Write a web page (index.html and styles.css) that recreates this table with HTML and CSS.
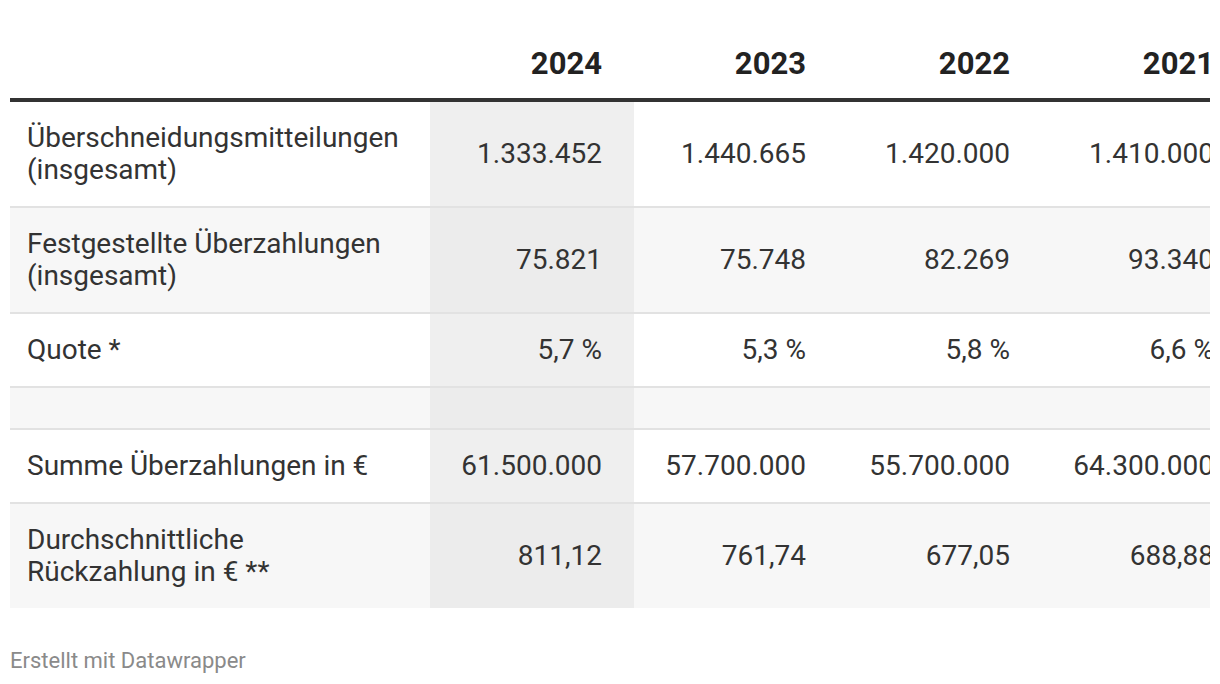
FILE: index.html
```html
<!DOCTYPE html>
<html lang="de">
<head>
<meta charset="utf-8">
<title>Überzahlungen</title>
<link rel="stylesheet" href="styles.css">
</head>
<body>
<div class="chart">
  <div class="table-wrap">
    <table class="data">
      <colgroup>
        <col class="c-label">
        <col class="c-num">
        <col class="c-num">
        <col class="c-num">
        <col class="c-num">
      </colgroup>
      <thead>
        <tr>
          <th class="label"></th>
          <th class="num hl-head">2024</th>
          <th class="num">2023</th>
          <th class="num">2022</th>
          <th class="num">2021</th>
        </tr>
      </thead>
      <tbody>
        <tr>
          <td class="label">Überschneidungsmitteilungen<br>(insgesamt)</td>
          <td class="num hl">1.333.452</td>
          <td class="num">1.440.665</td>
          <td class="num">1.420.000</td>
          <td class="num">1.410.000</td>
        </tr>
        <tr class="stripe">
          <td class="label">Festgestellte Überzahlungen<br>(insgesamt)</td>
          <td class="num hl">75.821</td>
          <td class="num">75.748</td>
          <td class="num">82.269</td>
          <td class="num">93.340</td>
        </tr>
        <tr>
          <td class="label">Quote *</td>
          <td class="num hl">5,7 %</td>
          <td class="num">5,3 %</td>
          <td class="num">5,8 %</td>
          <td class="num">6,6 %</td>
        </tr>
        <tr class="stripe empty">
          <td class="label"></td>
          <td class="num hl"></td>
          <td class="num"></td>
          <td class="num"></td>
          <td class="num"></td>
        </tr>
        <tr>
          <td class="label">Summe Überzahlungen in €</td>
          <td class="num hl">61.500.000</td>
          <td class="num">57.700.000</td>
          <td class="num">55.700.000</td>
          <td class="num">64.300.000</td>
        </tr>
        <tr class="stripe last">
          <td class="label">Durchschnittliche<br>Rückzahlung in € **</td>
          <td class="num hl">811,12</td>
          <td class="num">761,74</td>
          <td class="num">677,05</td>
          <td class="num">688,88</td>
        </tr>
      </tbody>
    </table>
  </div>
  <div class="footer">Erstellt mit Datawrapper</div>
</div>
</body>
</html>
```
FILE: styles.css
```css
html, body {
  margin: 0;
  padding: 0;
  background: #ffffff;
}

body {
  font-family: Roboto, "Noto Sans", "Liberation Sans", sans-serif;
  color: #333333;
}

.chart {
  padding: 0 10px;
}

.table-wrap {
  width: 1200px;
  overflow: hidden;
}

.data {
  border-collapse: collapse;
  table-layout: fixed;
  width: 1236px;
}

.c-label {
  width: 420px;
}

.c-num {
  width: 204px;
}

.data th {
  font-weight: 700;
  font-size: 31px;
  line-height: 36px;
  color: #222222;
  padding: 46px 32px 16px 0;
  border-bottom: 4px solid #333333;
  text-align: right;
  vertical-align: bottom;
}

.data td {
  font-size: 28px;
  line-height: 32px;
  padding: 20px 32px 20px 0;
  border-bottom: 2px solid #e2e2e2;
  vertical-align: middle;
  background: #ffffff;
  white-space: nowrap;
}

.data td.label {
  padding-left: 17px;
  padding-right: 10px;
  text-align: left;
}

.data td.num {
  text-align: right;
}

.data tr.stripe td {
  background: #f7f7f7;
}

.data td.hl {
  background: #efefef;
}

.data tr.stripe td.hl {
  background: #ececec;
}

.data tr.empty td {
  height: 0;
}

.data tr.last td {
  border-bottom: none;
}

.footer {
  margin-top: 41px;
  font-size: 22px;
  line-height: 24px;
  color: #8a8a8a;
}
```
